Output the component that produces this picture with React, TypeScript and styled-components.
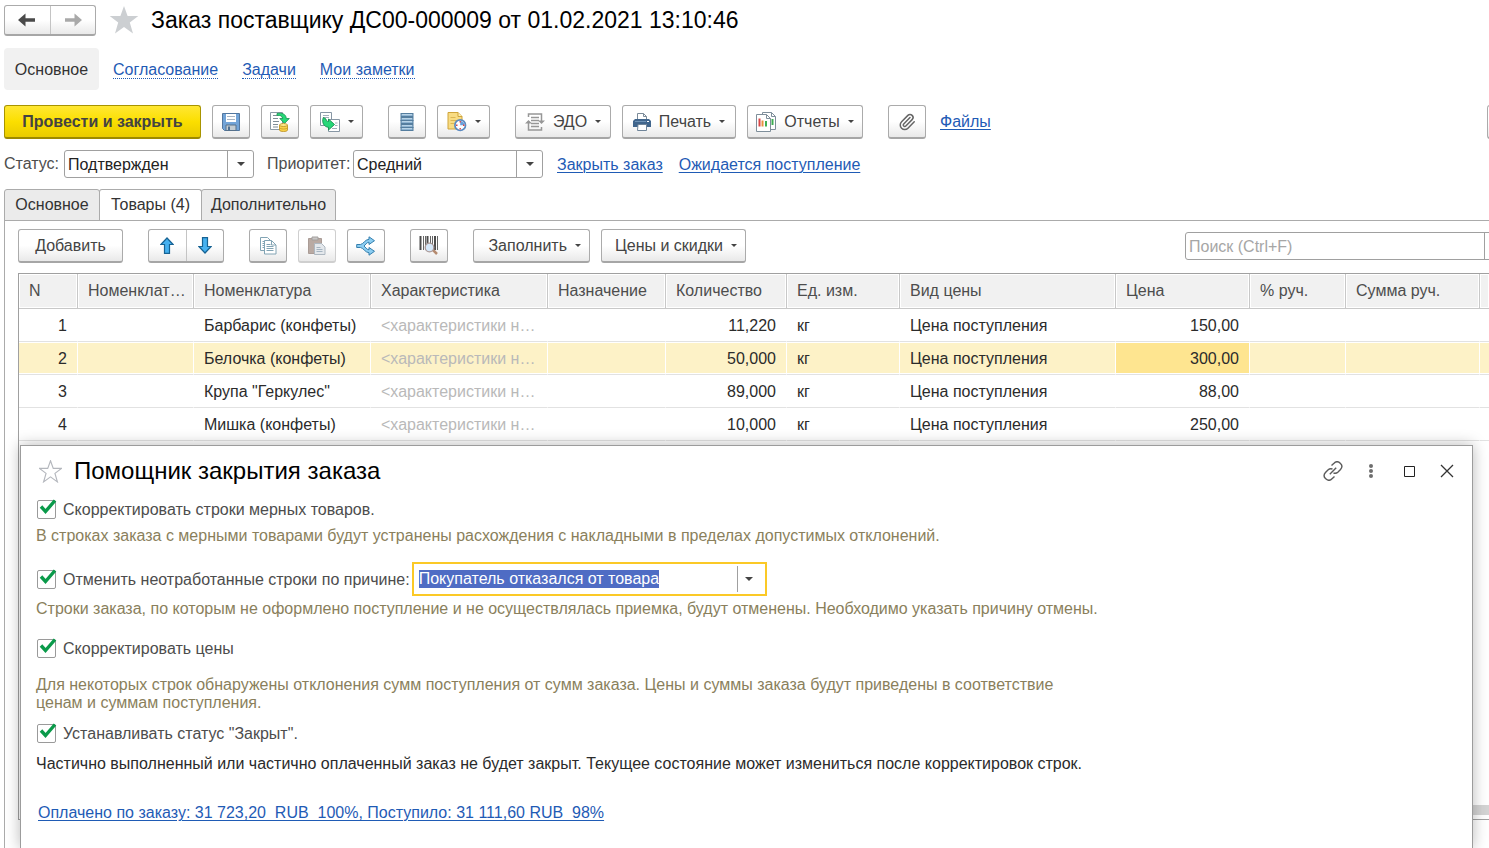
import React from "react";
import styled, { createGlobalStyle, css } from "styled-components";
import { Paperclip } from "lucide-react";

const GlobalStyle = createGlobalStyle`
  * { box-sizing: border-box; }
  html, body { margin: 0; padding: 0; background: #fff; }
  body, button, input, select, table {
    font-family: "Liberation Sans", Arial, sans-serif;
    font-size: 16px;
  }
  body { line-height: 18px; color: #404040; }
`;

const LINK = "#1f5bb5";

const Page = styled.div`
  position: relative;
  min-height: 100vh;
  overflow: hidden;
  display: flex;
  flex-direction: column;
`;

const TitleBar = styled.header`
  display: flex;
  align-items: center;
  height: 40px;
  padding-left: 4px;
`;

const raised = css`
  border: 1px solid #ababab;
  border-bottom: 2px solid #a6a6a6;
  border-radius: 3px;
  background: linear-gradient(#fff 50%, #e9e9e9);
`;

const PairFrame = styled.div<{ $width: number; $height: number }>`
  ${raised}
  display: flex;
  width: ${(p) => p.$width}px;
  height: ${(p) => p.$height}px;
`;

const PairButton = styled.button`
  flex: 1;
  display: flex;
  align-items: center;
  justify-content: center;
  padding: 0;
  border: 0;
  background: none;
  & + & { border-left: 1px solid #c4c4c4; }
`;

const StarButton = styled.button`
  display: flex;
  align-items: center;
  justify-content: center;
  width: 32px;
  height: 32px;
  padding: 0;
  border: 0;
  background: none;
`;

const Title = styled.h1`
  margin: 0;
  font-size: 23px;
  line-height: 32px;
  font-weight: 400;
  color: #000;
  white-space: nowrap;
`;

const DialogTitle = styled(Title)`
  font-size: 24px;
`;

const TitleStar = styled(StarButton)`
  margin: 0 11px 0 12px;
`;

const Sections = styled.nav`
  display: flex;
  align-items: center;
  gap: 24px;
  margin: 8px 4px 0;
  height: 42px;
`;

const CurrentSection = styled.span`
  display: flex;
  align-items: center;
  justify-content: center;
  width: 95px;
  height: 42px;
  margin-right: -10px;
  padding-top: 2px;
  border-radius: 4px;
  background: #f1f1f1;
  color: #333;
`;

const SectionLink = styled.a`
  margin-top: 2px;
  line-height: 16px;
  color: ${LINK};
  text-decoration: none;
  border-bottom: 1px dotted ${LINK};
`;

const Link = styled.a`
  color: ${LINK};
  text-decoration: underline;
  text-decoration-thickness: 1px;
  text-underline-offset: 2px;
  white-space: pre;
`;

const Toolbar = styled.div`
  display: flex;
  align-items: center;
  margin: 15px 0 0 4px;
  height: 34px;
`;

const Group = styled.div<{ $gap?: number }>`
  display: flex;
  align-items: center;
  gap: ${(p) => p.$gap ?? 11}px;
  margin-right: 25px;
`;

const Button = styled.button<{ $width: number; $faded?: boolean; $end?: boolean }>`
  ${raised}
  flex: none;
  display: flex;
  align-items: center;
  justify-content: ${(p) => (p.$end ? "flex-end" : "center")};
  gap: 8px;
  width: ${(p) => p.$width}px;
  height: 34px;
  padding: 0 ${(p) => (p.$end ? 8 : 0)}px 0 0;
  color: #444;
  white-space: nowrap;
  ${(p) => p.$faded && css`border-color: #cfcfcf;`}
`;

const PrimaryButton = styled(Button)`
  border-color: #a89400;
  border-bottom-color: #9c8900;
  background: linear-gradient(#ffe733, #fbdf00 50%, #e9cb00);
  font-weight: 700;
  color: #434343;
`;

const CutOffButton = styled(Button)`
  margin: 0 -36px 0 auto;
`;

const Caret = styled.span`
  border: 3px solid transparent;
  border-top-color: #444;
  border-bottom: 0;
`;

const Fields = styled.div`
  display: flex;
  align-items: center;
  height: 28px;
  margin: 11px 4px 0;
`;

const FieldLabel = styled.label`
  color: #4d4d4d;
  &:nth-of-type(1) { width: 60px; }
  &:nth-of-type(2) { width: 86px; margin-left: 13px; }
`;

const SelectFrame = styled.div`
  display: flex;
  width: 190px;
  height: 28px;
  border: 1px solid #a0a0a0;
  border-radius: 3px;
  background: #fff;
`;

const Select = styled.select`
  flex: 1;
  min-width: 0;
  padding: 0 3px;
  border: 0;
  outline: 0;
  appearance: none;
  background: none;
  color: #222;
`;

const DropMark = styled.span<{ $width: number }>`
  flex: none;
  display: flex;
  align-items: center;
  justify-content: center;
  width: ${(p) => p.$width}px;
  border-left: 1px solid #a0a0a0;
`;

const DropCaret = styled(Caret)`
  border-width: 4px 4px 0;
`;

const FieldLinks = styled.div`
  display: flex;
  gap: 16px;
  margin-left: 14px;
  padding-top: 1px;
`;

const Tabs = styled.div`
  display: flex;
  height: 32px;
  margin: 11px 0 -1px 4px;
`;

const Tab = styled.button<{ $width: number; $active?: boolean }>`
  width: ${(p) => p.$width}px;
  padding: 0;
  border: 1px solid #ababab;
  border-bottom-color: ${(p) => (p.$active ? "#fff" : "#ababab")};
  border-radius: 3px 3px 0 0;
  background: ${(p) => (p.$active ? "#fff" : "#ebebeb")};
  color: #333;
  white-space: nowrap;
  & + & { margin-left: -1px; }
`;

const Panel = styled.main`
  flex: 1;
  display: flex;
  flex-direction: column;
  margin-left: 4px;
  padding: 8px 0 28px 13px;
  border: 1px solid #ababab;
  border-right: 0;
  border-bottom: 0;
`;

const CommandBar = styled.div`
  display: flex;
  align-items: center;
  height: 34px;
`;

const SearchFrame = styled.div`
  display: flex;
  width: 328px;
  height: 28px;
  margin: 0 -24px 0 auto;
  border: 1px solid #a0a0a0;
  border-radius: 3px;
`;

const SearchInput = styled.input`
  flex: 1;
  min-width: 0;
  padding: 2px 3px 0;
  border: 0;
  outline: 0;
  background: none;
  &::placeholder { color: #a6a6a6; opacity: 1; }
`;

const ClearButton = styled.button`
  width: 28px;
  border: 0;
  border-left: 1px solid #a0a0a0;
  background: none;
`;

const GridFrame = styled.div`
  flex: 1;
  display: flex;
  flex-direction: column;
  justify-content: space-between;
  margin-top: 10px;
  border: 1px solid #a0a0a0;
  border-right: 0;
`;

const Grid = styled.table`
  width: 100%;
  table-layout: fixed;
  border-collapse: separate;
  border-spacing: 0;
`;

const HeadCell = styled.th`
  height: 35px;
  padding: 0 6px 0 10px;
  border-right: 1px solid #c8c8c8;
  border-bottom: 1px solid #c8c8c8;
  background: #f1f1f1;
  box-shadow: inset 0 0 0 1px #fff;
  font-weight: 400;
  text-align: left;
  color: #4d4d4d;
  overflow: hidden;
  text-overflow: ellipsis;
  white-space: nowrap;
  &:last-child { border-right: 0; }
`;

const Cell = styled.td<{ $right?: boolean; $muted?: boolean; $selected?: boolean; $current?: boolean }>`
  height: 33px;
  padding: 2px 10px 0;
  border-right: 1px solid ${(p) => (p.$selected ? "#fff" : "transparent")};
  border-bottom: 1px solid #e2e2e2;
  background: ${(p) => (p.$current ? "#fee590" : p.$selected ? "#fdf2c7" : "#fff")};
  box-shadow: inset 0 1px 0 #fff, inset 0 -1px 0 #fff;
  color: ${(p) => (p.$muted ? "#b9b9b9" : "#2b2b2b")};
  text-align: ${(p) => (p.$right ? "right" : "left")};
  overflow: hidden;
  text-overflow: ellipsis;
  white-space: nowrap;
  &:last-child { border-right: 0; }
`;

const ScrollTrack = styled.div`
  height: 10px;
  margin: 0 0 4px 24px;
  background: #d4d4d4;
`;

const Dialog = styled.section`
  position: absolute;
  top: 445px;
  right: 16px;
  bottom: 0;
  left: 20px;
  padding: 0 15px;
  border: 1px solid #9c9c9c;
  border-bottom: 0;
  background: #fff;
  box-shadow: 0 0 14px rgba(0, 0, 0, 0.28);
`;

const DialogHead = styled.div`
  display: flex;
  align-items: center;
  height: 50px;
`;

const DialogStar = styled(StarButton)`
  margin: 0 8px 0 -2px;
`;

const WindowButtons = styled.div`
  display: flex;
  gap: 6px;
  margin: 0 -6px 0 auto;
`;

const CheckRow = styled.div<{ $tall?: boolean; $gap: number }>`
  display: flex;
  align-items: center;
  height: ${(p) => (p.$tall ? 34 : 26)}px;
  margin-top: ${(p) => p.$gap}px;
`;

const CheckLabel = styled.label`
  display: flex;
  align-items: center;
  gap: 7px;
  padding-left: 1px;
  color: #4d4d4d;
  white-space: nowrap;
`;

const CheckText = styled.span`
  padding-top: 2px;
`;

const CheckBox = styled.span`
  position: relative;
  display: flex;
  svg { position: absolute; left: 0; bottom: 0; pointer-events: none; }
`;

const CheckInput = styled.input`
  appearance: none;
  width: 19px;
  height: 19px;
  margin: 0;
  border: 1px solid #9a9a9a;
  border-radius: 2px;
  background: #fff;
  & + svg { visibility: hidden; }
  &:checked + svg { visibility: visible; }
`;

const Note = styled.p<{ $gap: number; $dark?: boolean }>`
  max-width: 1080px;
  margin: ${(p) => p.$gap}px 0 0;
  color: ${(p) => (p.$dark ? "#2b2b2b" : "#8a7f5c")};
`;

const ReasonFrame = styled.div`
  display: flex;
  align-items: center;
  width: 355px;
  height: 34px;
  margin-left: 2px;
  border: 2px solid #fbc926;
  background: #fff;
`;

const ReasonInput = styled.input`
  flex: 1;
  min-width: 0;
  height: 18px;
  padding: 0 5px;
  border: 0;
  outline: 0;
  line-height: 18px;
  color: #2b2b2b;
  &::selection { background: #4f6cc4; color: #fff; }
`;

const ReasonDrop = styled(DropMark)`
  height: 26px;
  padding-right: 4px;
`;

const Totals = styled.div`
  margin: 31px 0 0 2px;
`;

const Tick = () => (
  <svg width="21" height="21" viewBox="0 0 21 21">
    <path d="M4 8.500 8.500 13.500 18 2.500" fill="none" stroke="#0a9a4a" strokeWidth="3.400" />
  </svg>
);

const Arrow = ({ color, flip }: { color: string; flip?: boolean }) => (
  <svg width="18" height="14" viewBox="0 0 18 14">
    <path d={flip ? "M18 7 10.500 0.500V5.200H1V8.800H10.500V13.500Z" : "M0 7 7.500 0.500V5.200H17V8.800H7.500V13.500Z"} fill={color} />
  </svg>
);

const StarIcon = ({ size, outline }: { size: number; outline?: boolean }) => (
  <svg width={size} height={size} viewBox="0 0 30 30">
    <path
      d="M15 1 18.600 11H29.300L20.800 17.500 24 28.500 15 22 6 28.500 9.200 17.500 0.700 11H11.400Z"
      fill={outline ? "none" : "#cccfd2"}
      stroke={outline ? "#b4b7bd" : "none"}
      strokeWidth="1.500"
    />
  </svg>
);

const SaveIcon = () => (
  <svg width="18" height="18" viewBox="0 0 18 18">
    <path d="M.5.5h17v17h-15l-2-2z" fill="#72a4d8" stroke="#52779f" />
    <path d="M4 1h10v8H4z" fill="#fff" />
    <path d="M5 3.500h8M5 6.500h8" stroke="#a9b6c4" />
    <path d="M4 12h10v5.500H4z" fill="#c3ccd2" stroke="#56708a" />
    <path d="M6 13.500h2v4H6z" fill="#4d6f92" />
  </svg>
);

const PostIcon = () => (
  <svg width="20" height="20" viewBox="0 0 20 20">
    <path d="M.5.5h12v17H.5z" fill="#fff" stroke="#8b9aa5" />
    <path d="M3 3.500h4M3 6.500h5M3 9.500h6M3 12.500h5M3 15h5" stroke="#7f8d97" />
    <path d="M7 1.500C12 .5 16 2 16.300 6.500H19.300L14.500 11.500 9.800 6.500H12.500C12.300 4 10.500 3 7 3.500Z" fill="#27d878" stroke="#16904f" strokeWidth=".8" />
    <path d="M9.500 13v5c0 2 8 2 8 0v-5" fill="#f9d24a" stroke="#b98d1e" strokeWidth=".8" />
    <ellipse cx="13.500" cy="13" rx="4" ry="1.500" fill="#ffea8c" stroke="#b98d1e" strokeWidth=".8" />
    <path d="M9.500 15.500c0 2 8 2 8 0" fill="none" stroke="#c69a25" strokeWidth=".8" />
  </svg>
);

const CreateFromIcon = () => (
  <svg width="20" height="20" viewBox="0 0 20 20">
    <path d="M.5.500h11v13H.5z" fill="#fff" stroke="#8796a4" />
    <path d="M3 3.500h6M3 5.500h6" stroke="#a2afba" />
    <path d="M8.500 7.500h11v12h-11z" fill="#fff" stroke="#8796a4" />
    <path d="M15 11h2.500M15 13.500h2.500M12 16.500h5" stroke="#a2afba" />
    <path d="M3.300 5.500 6 7C6 8.500 6.800 9.300 8.500 9.500V7L14.500 12.500 8.500 18V15.300C4 15 1.500 10.500 3.300 5.500Z" fill="#27d878" stroke="#16904f" strokeWidth=".9" />
  </svg>
);

const RegisterIcon = () => (
  <svg width="14" height="18" viewBox="0 0 14 18">
    {[0, 4, 7, 11, 14].map((y) => (
      <React.Fragment key={y}>
        <rect x="1" y={y + 0.5} width="12" height="3" fill="#8fb4d2" stroke="#557e9f" />
        <path d={`M2 ${y + 1.5}h10`} stroke="#b8d3e6" />
      </React.Fragment>
    ))}
  </svg>
);

const ReminderIcon = () => (
  <svg width="20" height="20" viewBox="0 0 20 20">
    <path d="M1 .5h10l4 4V17H1z" fill="#f8dc83" stroke="#cfa43b" />
    <path d="M11 .5v4h4" fill="#fff0b8" stroke="#cfa43b" />
    <path d="M3.500 5.500h5M3.500 8.500h7M3.500 11.500h4" stroke="#dcb653" />
    <circle cx="13.200" cy="13.200" r="5.300" fill="#fff" stroke="#5b8ac0" strokeWidth="1.700" />
    <path d="M13.200 13.200V9A4.200 4.200 0 0 1 17.400 13.200Z" fill="#6aa0dc" />
    <path d="M13.200 9v1.500M13.200 16v1.500M9 13.200h1.500M16 13.200h1.500" stroke="#dd4444" strokeWidth="1.400" />
  </svg>
);

const EdoIcon = () => (
  <svg width="20" height="18" viewBox="0 0 20 18" fill="none" stroke="#979797" strokeWidth="1.500">
    <path d="M3.500 4V1H16.500V9" />
    <path d="M16.500 14V17H3.500V8" />
    <path d="M6 4.500h8M6 7.500h8M6 10.500h8M6 13.500h8" />
    <path d="M0 10.500 3.500 7 7 10.500ZM13 7.500 16.500 11 20 7.500Z" fill="#979797" stroke="none" />
  </svg>
);

const PrinterIcon = () => (
  <svg width="18" height="18" viewBox="0 0 18 18">
    <path d="M4.500 7V.5h6l3 3V7" fill="#fff" stroke="#7b8b99" />
    <path d="M10.500.5v3h3" fill="none" stroke="#7b8b99" />
    <path d="M2 6h14l2 2v6H0V8z" fill="#40658c" />
    <path d="M2 8.500h11" stroke="#6f93b6" />
    <path d="M14 8.500h2" stroke="#fff" />
    <path d="M5 11.500h8.500v6H4.500z" fill="#fff" stroke="#6f8499" />
  </svg>
);

const ReportIcon = () => (
  <svg width="20" height="20" viewBox="0 0 20 20">
    <path d="M6.500.5h9l4 4v13h-13z" fill="#fff" stroke="#7e8e9a" />
    <path d="M15.500.5v4h4" fill="none" stroke="#7e8e9a" />
    <path d="M16.500 7v6" stroke="#3fae52" strokeWidth="2" />
    <path d="M.5 2.500h10l4 4v13H.5z" fill="#fff" stroke="#7e8e9a" />
    <path d="M10.500 2.500v4h4" fill="none" stroke="#7e8e9a" />
    <path d="M3.500 6.500v8" stroke="#d94545" strokeWidth="2" />
    <path d="M6.500 8.500v6" stroke="#e89140" strokeWidth="2" />
    <path d="M10 9v5.500" stroke="#3fae52" strokeWidth="2" />
  </svg>
);

const BlueArrow = ({ down }: { down?: boolean }) => (
  <svg width="14" height="17" viewBox="0 0 14 17">
    <path
      d={down ? "M7 16 .9 9.500H4.500V.7H9.500V9.500H13.100Z" : "M7 1 .9 7.500H4.500V16.300H9.500V7.500H13.100Z"}
      fill="#46b1f0"
      stroke="#176394"
      strokeWidth="1.200"
    />
  </svg>
);

const CopyIcon = () => (
  <svg width="17" height="18" viewBox="0 0 17 18" stroke="#82a4b4">
    <path d="M.5.500h7l3 3v10H.5z" fill="#fff" />
    <path d="M2.500 4.500h2M2.500 6.500h2M2.500 8.500h2M2.500 10.500h2" />
    <path d="M4.500 3.500h7l4.500 4.500v9H4.500z" fill="#fff" />
    <path d="M11.500 3.500v4.500H16M6.500 7.500h4M6.500 9.500h7M6.500 11.500h7M6.500 13.500h7" fill="none" />
  </svg>
);

const PasteIcon = () => (
  <svg width="18" height="19" viewBox="0 0 18 19">
    <path d="M.5 2.500h13v15H.5z" fill="#b9aaa3" stroke="#aa9c96" />
    <path d="M4 1h6v3H4z" fill="#c9c7c6" stroke="#a3a09e" />
    <path d="M6.500 7.500h7l3.500 3.500v7.500H6.500z" fill="#e4e8ec" stroke="#aeb8c1" />
    <path d="M8.500 11.500h4M8.500 13.500h6M8.500 15.500h6" stroke="#a5b4c1" />
  </svg>
);

const ShareIcon = () => (
  <svg width="20" height="20" viewBox="0 0 20 20">
    <path
      d="M.7 8.500H4.500C7.500 8 9 3.500 13 3.300V.8L18.500 4.700 13 8.500V6.200C10.500 6.300 9.500 9 8 10 9.500 11 10.500 13.700 13 13.800V11.500L18.500 15.300 13 19.200V16.700C9 16.500 7.500 12 4.500 11.500H.7Z"
      fill="#8bcdf1"
      stroke="#357fae"
    />
  </svg>
);

const BarcodeIcon = () => (
  <svg width="20" height="19" viewBox="0 0 20 19">
    <path d="M1.500 0v14M8.500 0v14M16 0v14" stroke="#4c4c4c" strokeWidth="2" />
    <path d="M4.500 0v14M6.500 0v14M11.500 0v14M13.500 0v14M18.500 0v14" stroke="#666" />
    <path d="M13.500 13.500 18 18" stroke="#b58b70" strokeWidth="2.500" />
    <circle cx="10.500" cy="11.500" r="4.300" fill="#d5e8fa" stroke="#aa9a98" strokeWidth="1.300" />
  </svg>
);

const ChainIcon = () => (
  <svg width="20" height="20" viewBox="0 0 20 20" fill="none" stroke="#5c5c5c" strokeWidth="1.400">
    <path d="M8.500 4.500 11 2.200C15-1.800 21.500 4 17.500 8.500L14.800 11.300C13.500 12.500 12 12.500 10.500 12" />
    <path d="M11.500 15.500 9 17.800C5 21.800-1.500 16 2.500 11.500L5.200 8.700C6.500 7.500 8 7.500 9.500 8" />
    <path d="M6.800 13.200 13.200 6.800" />
  </svg>
);

const DotsIcon = () => (
  <svg width="6" height="16" viewBox="0 0 6 16" fill="#6e6e6e">
    <circle cx="3" cy="3" r="2" />
    <circle cx="3" cy="8" r="2" />
    <circle cx="3" cy="13" r="2" />
  </svg>
);

const MaximizeIcon = () => (
  <svg width="12" height="12" viewBox="0 0 12 12">
    <path d="M1.500 1.500h10v10h-10z" fill="none" stroke="#222" />
  </svg>
);

const CloseIcon = () => (
  <svg width="14" height="14" viewBox="0 0 14 14">
    <path d="M1 1 13 13M13 1 1 13" stroke="#333" strokeWidth="1.300" />
  </svg>
);

const columns: { title: string; width?: number }[] = [
  { title: "N", width: 59 },
  { title: "Номенклатура поставщика", width: 116 },
  { title: "Номенклатура", width: 177 },
  { title: "Характеристика", width: 177 },
  { title: "Назначение", width: 118 },
  { title: "Количество", width: 121 },
  { title: "Ед. изм.", width: 113 },
  { title: "Вид цены", width: 216 },
  { title: "Цена", width: 134 },
  { title: "% руч.", width: 96 },
  { title: "Сумма руч.", width: 134 },
  { title: "" },
];

const rows = [
  { name: "Барбарис (конфеты)", qty: "11,220", price: "150,00" },
  { name: "Белочка (конфеты)", qty: "50,000", price: "300,00" },
  { name: "Крупа \"Геркулес\"", qty: "89,000", price: "88,00" },
  { name: "Мишка (конфеты)", qty: "10,000", price: "250,00" },
];

const Check = ({ text }: { text: string }) => (
  <CheckLabel>
    <CheckBox>
      <CheckInput type="checkbox" defaultChecked />
      <Tick />
    </CheckBox>
    <CheckText>{text}</CheckText>
  </CheckLabel>
);

const Dropdown = ({ id, value }: { id: string; value: string }) => (
  <SelectFrame>
    <Select id={id} defaultValue={value}>
      <option>{value}</option>
    </Select>
    <DropMark $width={26}><DropCaret /></DropMark>
  </SelectFrame>
);

const Goods = () => (
  <Grid>
    <colgroup>
      {columns.map((c, i) => <col key={i} width={c.width} />)}
    </colgroup>
    <thead>
      <tr>{columns.map((c, i) => <HeadCell key={i}>{c.title}</HeadCell>)}</tr>
    </thead>
    <tbody>
      {rows.map((r, i) => {
        const selected = i === 1;
        return (
          <tr key={r.name}>
            <Cell $selected={selected} $right>{i + 1}</Cell>
            <Cell $selected={selected} />
            <Cell $selected={selected}>{r.name}</Cell>
            <Cell $selected={selected} $muted>{"<характеристики не используются>"}</Cell>
            <Cell $selected={selected} />
            <Cell $selected={selected} $right>{r.qty}</Cell>
            <Cell $selected={selected}>кг</Cell>
            <Cell $selected={selected}>Цена поступления</Cell>
            <Cell $selected={selected} $current={selected} $right>{r.price}</Cell>
            <Cell $selected={selected} />
            <Cell $selected={selected} />
            <Cell $selected={selected} />
          </tr>
        );
      })}
    </tbody>
  </Grid>
);

const ClosingAssistant = () => (
  <Dialog role="dialog" aria-labelledby="assistant-title">
    <DialogHead>
      <DialogStar aria-label="В избранное"><StarIcon size={23} outline /></DialogStar>
      <DialogTitle as="h2" id="assistant-title">Помощник закрытия заказа</DialogTitle>
      <WindowButtons>
        <StarButton aria-label="Ссылка"><ChainIcon /></StarButton>
        <StarButton aria-label="Ещё"><DotsIcon /></StarButton>
        <StarButton aria-label="Развернуть"><MaximizeIcon /></StarButton>
        <StarButton aria-label="Закрыть"><CloseIcon /></StarButton>
      </WindowButtons>
    </DialogHead>
    <CheckRow $gap={0}><Check text="Скорректировать строки мерных товаров." /></CheckRow>
    <Note $gap={5}>
      В строках заказа с мерными товарами будут устранены расхождения с накладными в пределах допустимых отклонений.
    </Note>
    <CheckRow $tall $gap={17}>
      <Check text="Отменить неотработанные строки по причине:" />
      <ReasonFrame>
        <ReasonInput
          aria-label="Причина отмены"
          defaultValue="Покупатель отказался от товара"
          autoFocus
          onFocus={(e) => e.currentTarget.select()}
        />
        <ReasonDrop $width={28}><DropCaret /></ReasonDrop>
      </ReasonFrame>
    </CheckRow>
    <Note $gap={4}>
      Строки заказа, по которым не оформлено поступление и не осуществлялась приемка, будут отменены. Необходимо указать причину отмены.
    </Note>
    <CheckRow $gap={17}><Check text="Скорректировать цены" /></CheckRow>
    <Note $gap={15}>
      Для некоторых строк обнаружены отклонения сумм поступления от сумм заказа. Цены и суммы заказа будут приведены в соответствие
      <br />
      ценам и суммам поступления.
    </Note>
    <CheckRow $gap={8}><Check text={'Устанавливать статус "Закрыт".'} /></CheckRow>
    <Note $gap={9} $dark>
      Частично выполненный или частично оплаченный заказ не будет закрыт. Текущее состояние может измениться после корректировок строк.
    </Note>
    <Totals>
      <Link href="#">{"Оплачено по заказу: 31 723,20  RUB  100%, Поступило: 31 111,60 RUB  98%"}</Link>
    </Totals>
  </Dialog>
);

export default function App() {
  return (
    <Page>
      <GlobalStyle />
      <TitleBar>
        <PairFrame $width={92} $height={31}>
          <PairButton aria-label="Назад"><Arrow color="#4a4a4a" /></PairButton>
          <PairButton aria-label="Вперёд"><Arrow color="#a9a9a9" flip /></PairButton>
        </PairFrame>
        <TitleStar aria-label="В избранное"><StarIcon size={30} /></TitleStar>
        <Title>Заказ поставщику ДС00-000009 от 01.02.2021 13:10:46</Title>
      </TitleBar>
      <Sections>
        <CurrentSection>Основное</CurrentSection>
        <SectionLink href="#">Согласование</SectionLink>
        <SectionLink href="#">Задачи</SectionLink>
        <SectionLink href="#">Мои заметки</SectionLink>
      </Sections>
      <Toolbar>
        <Group>
          <PrimaryButton $width={197}>Провести и закрыть</PrimaryButton>
          <Button $width={38} aria-label="Записать"><SaveIcon /></Button>
          <Button $width={38} aria-label="Провести"><PostIcon /></Button>
          <Button $width={53} aria-label="Создать на основании"><CreateFromIcon /><Caret /></Button>
        </Group>
        <Group>
          <Button $width={38} aria-label="Движения документа"><RegisterIcon /></Button>
          <Button $width={53} aria-label="Напоминание"><ReminderIcon /><Caret /></Button>
        </Group>
        <Group>
          <Button $width={96}><EdoIcon />ЭДО<Caret /></Button>
          <Button $width={114}><PrinterIcon />Печать<Caret /></Button>
          <Button $width={116}><ReportIcon />Отчеты<Caret /></Button>
        </Group>
        <Group $gap={14}>
          <Button $width={38} aria-label="Вложения"><Paperclip size={18} strokeWidth={2} color="#666" /></Button>
          <Link href="#">Файлы</Link>
        </Group>
        <CutOffButton $width={38} aria-label="Ещё" />
      </Toolbar>
      <Fields>
        <FieldLabel htmlFor="status">Статус:</FieldLabel>
        <Dropdown id="status" value="Подтвержден" />
        <FieldLabel htmlFor="priority">Приоритет:</FieldLabel>
        <Dropdown id="priority" value="Средний" />
        <FieldLinks>
          <Link href="#">Закрыть заказ</Link>
          <Link href="#">Ожидается поступление</Link>
        </FieldLinks>
      </Fields>
      <Tabs role="tablist">
        <Tab role="tab" $width={96}>Основное</Tab>
        <Tab role="tab" $width={103} $active aria-selected>Товары (4)</Tab>
        <Tab role="tab" $width={135}>Дополнительно</Tab>
      </Tabs>
      <Panel>
        <CommandBar>
          <Group><Button $width={105}>Добавить</Button></Group>
          <Group>
            <PairFrame $width={76} $height={34}>
              <PairButton aria-label="Вверх"><BlueArrow /></PairButton>
              <PairButton aria-label="Вниз"><BlueArrow down /></PairButton>
            </PairFrame>
          </Group>
          <Group>
            <Button $width={38} aria-label="Копировать"><CopyIcon /></Button>
            <Button $width={38} $faded aria-label="Вставить"><PasteIcon /></Button>
            <Button $width={38} aria-label="Разбить строку"><ShareIcon /></Button>
          </Group>
          <Group><Button $width={38} aria-label="Поиск по штрихкоду"><BarcodeIcon /></Button></Group>
          <Group>
            <Button $width={117} $end>Заполнить<Caret /></Button>
            <Button $width={145} $end>Цены и скидки<Caret /></Button>
          </Group>
          <SearchFrame>
            <SearchInput aria-label="Поиск" placeholder="Поиск (Ctrl+F)" />
            <ClearButton aria-label="Очистить" />
          </SearchFrame>
        </CommandBar>
        <GridFrame>
          <Goods />
          <ScrollTrack />
        </GridFrame>
      </Panel>
      <ClosingAssistant />
    </Page>
  );
}
